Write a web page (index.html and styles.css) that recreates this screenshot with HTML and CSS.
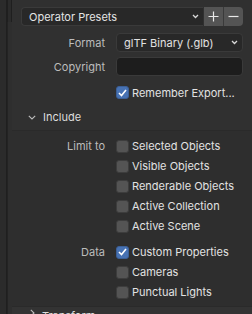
FILE: index.html
```html
<!DOCTYPE html>
<html>
<head>
<meta charset="utf-8">
<link rel="stylesheet" href="styles.css">
</head>
<body>
<div class="side"><div class="side-line"></div><div class="side-box"></div></div>
<div class="main">
  <div class="presets">
    <div class="preset-select"><span>Operator Presets</span>
      <svg class="chev" width="7" height="5" viewBox="0 0 7 5"><polyline points="1,1 3.5,3.5 6,1" fill="none" stroke="#d8d8d8" stroke-width="1.3"/></svg>
    </div>
    <div class="pbtn plus"><svg width="11" height="11" viewBox="0 0 11 11"><path d="M5.5 0.5v10M0.5 5.5h10" stroke="#e8e8e8" stroke-width="1.2"/></svg></div>
    <div class="pbtn minus"><svg width="11" height="11" viewBox="0 0 11 11"><path d="M0.5 5.5h10" stroke="#e8e8e8" stroke-width="1.2"/></svg></div>
  </div>

  <div class="row r-format">
    <div class="label">Format</div>
    <div class="select"><span>glTF Binary (.glb)</span>
      <svg class="chev" width="7" height="5" viewBox="0 0 7 5"><polyline points="1,1 3.5,3.5 6,1" fill="none" stroke="#d8d8d8" stroke-width="1.3"/></svg>
    </div>
  </div>
  <div class="row r-copy">
    <div class="label">Copyright</div>
    <div class="text-field"></div>
  </div>
  <div class="row r-remember">
    <div class="label"></div>
    <div class="check"><span class="box on"><svg width="9" height="8" viewBox="0 0 9 8"><polyline points="1,4 3.5,6.5 8,1" fill="none" stroke="#fff" stroke-width="1.6"/></svg></span><span>Remember Export...</span></div>
  </div>

  <div class="sub-header">
    <svg class="hchev" width="8" height="5" viewBox="0 0 8 5"><polyline points="0.8,0.8 4,4 7.2,0.8" fill="none" stroke="#bdbdbd" stroke-width="1.1"/></svg>
    <span>Include</span>
  </div>
  <div class="sub-body">
    <div class="row crow"><div class="label">Limit to</div><div class="check"><span class="box"></span><span>Selected Objects</span></div></div>
    <div class="row crow"><div class="label"></div><div class="check"><span class="box"></span><span>Visible Objects</span></div></div>
    <div class="row crow"><div class="label"></div><div class="check"><span class="box"></span><span>Renderable Objects</span></div></div>
    <div class="row crow"><div class="label"></div><div class="check"><span class="box"></span><span>Active Collection</span></div></div>
    <div class="row crow"><div class="label"></div><div class="check"><span class="box"></span><span>Active Scene</span></div></div>
    <div class="row crow gap-top"><div class="label">Data</div><div class="check"><span class="box on"><svg width="9" height="8" viewBox="0 0 9 8"><polyline points="1,4 3.5,6.5 8,1" fill="none" stroke="#fff" stroke-width="1.6"/></svg></span><span>Custom Properties</span></div></div>
    <div class="row crow"><div class="label"></div><div class="check"><span class="box"></span><span>Cameras</span></div></div>
    <div class="row crow"><div class="label"></div><div class="check"><span class="box"></span><span>Punctual Lights</span></div></div>
  </div>
  <div class="sub-header next">
    <svg class="hchev" width="5" height="8" viewBox="0 0 5 8"><polyline points="0.8,0.8 4,4 0.8,7.2" fill="none" stroke="#bdbdbd" stroke-width="1.1"/></svg>
    <span>Transform</span>
  </div>
</div>
</body>
</html>
```

FILE: styles.css
```css
html, body {
  margin: 0;
  padding: 0;
}
body {
  width: 252px;
  height: 314px;
  overflow: hidden;
  display: flex;
  background: #303030;
  font-family: Inter, "Noto Sans", sans-serif;
  font-size: 11px;
  color: #e2e2e2;
}
.side {
  width: 12px;
  flex: none;
  background: #2b2b2b;
  position: relative;
  border-right: 1px solid #1f1f1f;
  box-sizing: border-box;
}
.side-line {
  position: absolute;
  left: 6px;
  top: 0;
  bottom: 0;
  width: 2px;
  background: #1f1f1f;
}
.side-box {
  position: absolute;
  left: 7px;
  top: 22px;
  bottom: 0;
  width: 4px;
  background: #2e2e2e;
  border-left: 1px solid #232323;
}
.main {
  flex: 1;
  display: flex;
  flex-direction: column;
  min-width: 0;
}
.main > * {
  flex-shrink: 0;
}
.presets {
  margin: 7px 9px 0 9px;
  height: 19px;
  display: flex;
}
.preset-select {
  flex: 1;
  background: #282828;
  border: 1px solid #3a3a3a;
  border-right: none;
  border-radius: 4px 0 0 4px;
  display: flex;
  align-items: center;
  padding: 0 4px 0 7px;
  justify-content: space-between;
  color: #e4e4e4;
}
.pbtn {
  width: 19px;
  background: #545454;
  display: flex;
  align-items: center;
  justify-content: center;
}
.plus {
  margin-left: 1px;
  border-right: 1px solid #3a3a3a;
}
.minus {
  border-radius: 0 4px 4px 0;
}
.row {
  display: grid;
  grid-template-columns: 93px 1fr;
  column-gap: 11px;
  margin-right: 9px;
  align-items: center;
}
.label {
  text-align: right;
  color: #bcbcbc;
}
.r-format {
  margin-top: 7px;
  height: 19px;
}
.r-copy {
  margin-top: 5px;
  height: 19px;
}
.r-remember {
  margin-top: 7px;
  height: 19px;
}
.select {
  height: 19px;
  box-sizing: border-box;
  background: #282828;
  border: 1px solid #3a3a3a;
  border-radius: 4px;
  display: flex;
  align-items: center;
  justify-content: space-between;
  padding: 0 4px 0 7px;
}
.text-field {
  height: 19px;
  box-sizing: border-box;
  background: #1d1d1d;
  border: 1px solid #3a3a3a;
  border-radius: 4px;
}
.check {
  display: flex;
  align-items: center;
  gap: 3px;
  color: #e2e2e2;
  white-space: nowrap;
}
.box {
  width: 13px;
  height: 13px;
  box-sizing: border-box;
  border-radius: 3px;
  background: #545454;
  border: 1px solid #3d3d3d;
  display: flex;
  align-items: center;
  justify-content: center;
  flex: none;
}
.box.on {
  background: #4772b3;
  border-color: #3b5f96;
}
.sub-header {
  margin-top: 2px;
  height: 27px;
  display: flex;
  align-items: center;
  padding-left: 16px;
  gap: 7px;
  color: #dcdcdc;
  border-bottom: 1px solid #2a2a2a;
  box-sizing: border-box;
}
.sub-body {
  background: #2e2e2e;
  padding: 5px 0 4px;
}
.crow {
  height: 20px;
}
.gap-top {
  margin-top: 6px;
}
.sub-header.next {
  margin-top: 0;
  background: #333333;
  border-top: 1px solid #2a2a2a;
  align-items: flex-start;
  padding-top: 2px;
  padding-left: 18px;
}
```
